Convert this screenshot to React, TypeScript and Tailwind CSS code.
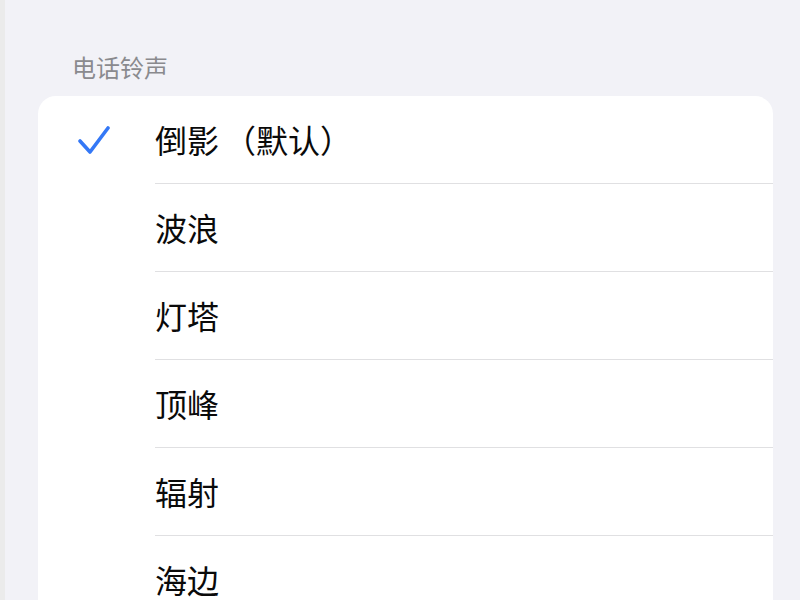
const ringtones = ["倒影", "波浪", "灯塔", "顶峰", "辐射", "海边"];

export default function App() {
  return (
    <div
      className="h-[600px] w-[800px] overflow-hidden bg-[#f2f2f7] flex"
      style={{ fontFamily: '"Noto Sans CJK SC", "Noto Sans", sans-serif' }}
    >
      <div className="w-[5px] bg-[#ebebeb] shrink-0" />
      <div className="flex-1 pl-[33px] pr-[27px]">
        <div className="pt-[52px] pl-[34px] h-[96px] text-[24px] leading-[30px] text-[#8a8a8e]">
          电话铃声
        </div>
        <div className="bg-white rounded-[18px] pb-[20px]">
          {ringtones.map((name, i) => (
            <div key={name} className="flex h-[88px]">
              <div className="w-[117px] shrink-0 flex items-center pl-[40px]">
                {i === 0 && (
                  <svg width="34" height="30" viewBox="0 0 34 30" fill="none">
                    <path
                      d="M2 16 L12 27 L30 3"
                      stroke="#3478f6"
                      strokeWidth="3.6"
                      strokeLinecap="round"
                      strokeLinejoin="round"
                    />
                  </svg>
                )}
              </div>
              <div
                className={
                  "flex-1 flex items-center pb-[2px] text-[32px] text-[#0a0a0a] " +
                  (i < ringtones.length - 1 ? "border-b border-[#e0e0e2]" : "")
                }
              >
                {name}
                {i === 0 && <span className="ml-[5px]">（默认）</span>}
              </div>
            </div>
          ))}
        </div>
      </div>
    </div>
  );
}
